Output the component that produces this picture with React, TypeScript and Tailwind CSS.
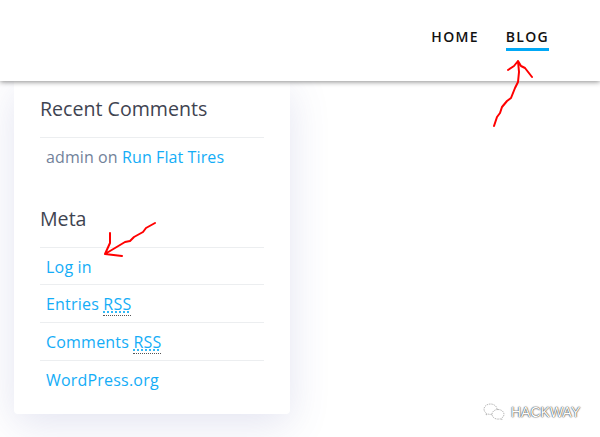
import React from "react";

const Rss = () => (
  <abbr className="underline decoration-dotted decoration-[#00a8f6] underline-offset-2 border-b border-dotted border-[#555]">RSS</abbr>
);

const Row = ({ children, first }: { children: React.ReactNode; first?: boolean }) => (
  <li className={first ? "border-t border-[#eceef0] h-[37px] pt-[2px] pl-[6px] flex items-center text-[16px] tracking-[0.2px] text-[#14adf7]" : "border-t border-[#eceef0] h-[38px] pl-[6px] flex items-center text-[16px] tracking-[0.2px] text-[#14adf7]"}>
    <a className="block leading-[24px]">{children}</a>
  </li>
);

export default function App() {
  return (
    <div className="relative w-[600px] h-[437px] overflow-hidden bg-white font-['Open_Sans',sans-serif]">
      <header className="relative z-10 h-[81px] bg-white shadow-[0_1px_5px_rgba(0,0,0,0.45)] flex justify-end items-start pr-[51px] pt-[29px] gap-[27px]">
        <a className="text-[14px] leading-[16px] font-semibold tracking-[1.3px] text-[#111] pb-[4px]">HOME</a>
        <a className="text-[14px] leading-[16px] font-semibold tracking-[1.3px] text-[#111] pb-[4px] border-b-[3px] border-[#00a8f6] h-[22px]">BLOG</a>
      </header>
      <main className="pl-[14px]">
        <aside className="w-[276px] h-[333px] bg-white rounded-b-[4px] px-[26px] pt-[14px] shadow-[0_10px_40px_rgba(80,90,170,0.16)]">
          <h2 className="text-[19.6px] leading-[28px] text-[#3f4451] mb-[14px]">Recent Comments</h2>
          <ul className="mb-[30px]">
            <li className="border-t border-[#eceef0] h-[38px] pl-[6px] flex items-center text-[16px] tracking-[0.1px] text-[#72829a]">
              <span className="whitespace-pre">admin on <a className="text-[#14adf7]">Run Flat Tires</a></span>
            </li>
          </ul>
          <h2 className="text-[19.6px] leading-[28px] text-[#3f4451] mb-[14px]">Meta</h2>
          <ul>
            <Row first>Log in</Row>
            <Row>Entries <Rss /></Row>
            <Row>Comments <Rss /></Row>
            <Row>WordPress.org</Row>
          </ul>
        </aside>
      </main>
      <svg className="absolute inset-0 z-20 pointer-events-none" width="600" height="437" fill="none" stroke="#f00" strokeWidth="2" strokeLinecap="round" strokeLinejoin="round">
        <path d="M494 126 L497 117 L500 113 L502 107 L507 101 L511 98 L515 88 L518 82 L519 72 L518 61 M508 70 L514 66 L518 61 L521 66 L525 68 L532 77" />
        <path d="M155 223 L146 228 L143 232 L134 237 L130 241 L125 242 L115 248 L105 254 M110 233 L110 243 L105 254 L122 256" />
      </svg>
      <div className="absolute z-20 left-[483px] top-[403px] flex items-center gap-[5px]">
        <svg width="23" height="18" viewBox="0 0 23 18" fill="white" stroke="#888" strokeWidth="0.6" strokeDasharray="1.5 0.8">
          <path d="M7.5 1C3.9 1 1 3.3 1 6.2c0 1.7 1 3.1 2.4 4.1L2.8 12l2.1-1c.8.3 1.7.4 2.6.4C11.1 11.4 14 9 14 6.2S11.1 1 7.5 1z" />
          <path d="M15 6.5c-3.4 0-6 2.2-6 4.8s2.6 4.8 6 4.8c.7 0 1.4-.1 2.1-.3l1.9 1-.5-1.6c1.5-.9 2.5-2.3 2.5-3.9 0-2.6-2.6-4.8-6-4.8z" />
        </svg>
        <span className="text-[14px] leading-[18px] text-white [text-shadow:0_0_1.5px_#333,0_0_1px_#333] font-['Liberation_Sans',sans-serif]">HACKWAY</span>
      </div>
    </div>
  );
}
